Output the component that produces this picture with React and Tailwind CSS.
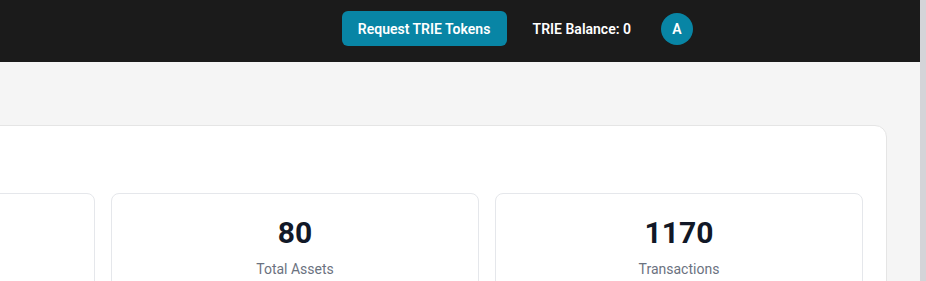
import React from "react"

const stats = [
  { value: "", label: "" },
  { value: "80", label: "Total Assets" },
  { value: "1170", label: "Transactions" },
]

const App = () => {
  return (
    <div className="flex h-screen w-full overflow-hidden font-['Roboto',sans-serif]">
      <div className="flex flex-1 flex-col min-w-0 bg-[#f5f5f5]">
        <header className="flex h-[62px] shrink-0 items-center justify-end bg-[#1b1b1b] pr-[227px] pb-[5px]">
          <button className="h-[35px] w-[165px] rounded-md bg-[#0885a5] text-sm font-semibold text-white">
            Request TRIE Tokens
          </button>
          <span className="ml-[26px] text-sm font-semibold text-white">TRIE Balance: 0</span>
          <div className="ml-[30px] flex h-8 w-8 items-center justify-center rounded-full bg-[#0885a5] text-sm font-semibold text-white">
            A
          </div>
        </header>

        <main className="flex flex-1 pt-[63px] pr-[33px] overflow-hidden">
          <div className="ml-[-298px] w-[1185px] h-[260px] shrink-0 rounded-xl border border-[#e5e5e5] bg-white px-6 pt-[67px]">
            <div className="grid grid-cols-[368px_368px_368px] gap-4">
              {stats.map((s, i) => (
                <div key={i} className="h-[140px] rounded-lg border border-[#e5e7eb] bg-white pt-[21px] text-center">
                  {s.value && <div className="text-3xl font-bold text-[#111827]">{s.value}</div>}
                  {s.label && <div className="mt-2 text-sm text-[#6b7280]">{s.label}</div>}
                </div>
              ))}
            </div>
          </div>
        </main>
      </div>
      <div className="w-[6px] shrink-0 bg-[#d4d4d8]" />
    </div>
  )
}

export default App
